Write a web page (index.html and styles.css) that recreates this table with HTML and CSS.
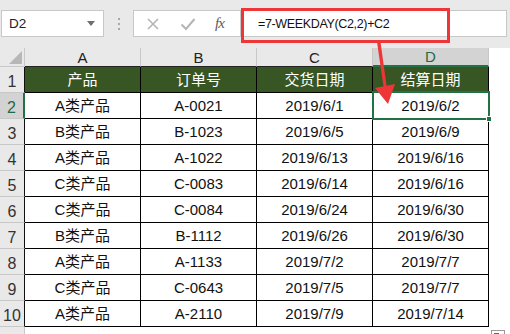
FILE: index.html
```html
<!DOCTYPE html>
<html>
<head>
<meta charset="utf-8">
<link rel="stylesheet" href="styles.css">
</head>
<body>
<div class="app">
  <div class="toolbar">
    <div class="namebox"><span class="cellref">D2</span><span class="dd"></span></div>
    <div class="grip"><i></i><i></i><i></i></div>
    <div class="fbtns">
      <svg class="ico" width="14" height="14" viewBox="0 0 14 14"><path d="M2 2 L12 12 M12 2 L2 12" stroke="#b5b5b5" stroke-width="1.6" fill="none"/></svg>
      <svg class="ico" width="16" height="14" viewBox="0 0 16 14"><path d="M1.5 7.5 L6 12 L14.5 2" stroke="#b5b5b5" stroke-width="2" fill="none"/></svg>
      <span class="fx">fx</span>
    </div>
    <div class="finput"><span class="formula">=7-WEEKDAY(C2,2)+C2</span></div>
  </div>
  <div class="sheet">
    <div class="corner"><span class="tri"></span></div>
    <div class="ch">A</div><div class="ch">B</div><div class="ch">C</div><div class="ch sel">D</div><div class="ch rest"></div>

    <div class="rh">1</div>
    <div class="c hd">产品</div><div class="c hd">订单号</div><div class="c hd">交货日期</div><div class="c hd">结算日期</div><div class="rest"></div>

    <div class="rh sel">2</div>
    <div class="c">A类产品</div><div class="c">A-0021</div><div class="c">2019/6/1</div><div class="c">2019/6/2</div><div class="rest"></div>

    <div class="rh">3</div>
    <div class="c">B类产品</div><div class="c">B-1023</div><div class="c">2019/6/5</div><div class="c">2019/6/9</div><div class="rest"></div>

    <div class="rh">4</div>
    <div class="c">A类产品</div><div class="c">A-1022</div><div class="c">2019/6/13</div><div class="c">2019/6/16</div><div class="rest"></div>

    <div class="rh">5</div>
    <div class="c">C类产品</div><div class="c">C-0083</div><div class="c">2019/6/14</div><div class="c">2019/6/16</div><div class="rest"></div>

    <div class="rh">6</div>
    <div class="c">C类产品</div><div class="c">C-0084</div><div class="c">2019/6/24</div><div class="c">2019/6/30</div><div class="rest"></div>

    <div class="rh">7</div>
    <div class="c">B类产品</div><div class="c">B-1112</div><div class="c">2019/6/26</div><div class="c">2019/6/30</div><div class="rest"></div>

    <div class="rh">8</div>
    <div class="c">A类产品</div><div class="c">A-1133</div><div class="c">2019/7/2</div><div class="c">2019/7/7</div><div class="rest"></div>

    <div class="rh">9</div>
    <div class="c">C类产品</div><div class="c">C-0643</div><div class="c">2019/7/5</div><div class="c">2019/7/7</div><div class="rest"></div>

    <div class="rh">10</div>
    <div class="c">A类产品</div><div class="c">A-2110</div><div class="c">2019/7/9</div><div class="c">2019/7/14</div><div class="rest"></div>

    <div class="rh last"></div>
  </div>

  <div class="selbox"><span class="handle"></span></div>
  <div class="redbox"></div>
  <svg class="arrow" width="510" height="334" viewBox="0 0 510 334">
    <polygon points="377,42 380.5,42 387,89 384,90" fill="#ee3537"/>
    <polygon points="375,88 395,84 388,104" fill="#ee3537"/>
  </svg>
  <div class="qa"><span></span></div>
</div>
</body>
</html>
```
FILE: styles.css
```css
* { box-sizing: border-box; }
html, body { margin: 0; padding: 0; }
body {
  width: 510px;
  height: 334px;
  overflow: hidden;
  background: #ffffff;
  font-family: "Liberation Sans", "Noto Sans CJK SC", sans-serif;
}
.app {
  position: relative;
  width: 510px;
  height: 334px;
  overflow: hidden;
}
.toolbar {
  height: 48px;
  background: #e9e9e9;
  display: flex;
  align-items: flex-start;
  padding-top: 10px;
  padding-left: 1px;
}
.namebox {
  width: 103px;
  height: 27px;
  background: #fff;
  border: 1px solid #c8c8c8;
  display: flex;
  align-items: center;
  justify-content: space-between;
  padding: 0 8px 0 7px;
}
.cellref { font-size: 13.5px; color: #222; }
.dd {
  width: 0; height: 0;
  border-left: 4px solid transparent;
  border-right: 4px solid transparent;
  border-top: 5px solid #6e6e6e;
}
.grip {
  width: 29px;
  height: 27px;
  display: flex;
  flex-direction: column;
  align-items: center;
  justify-content: center;
  gap: 3px;
}
.grip i { display: block; width: 2px; height: 2px; background: #a6a6a6; }
.fbtns {
  width: 108px;
  height: 27px;
  background: #fff;
  border: 1px solid #c8c8c8;
  display: flex;
  align-items: center;
  padding-left: 12px;
  gap: 0;
}
.fbtns .ico:nth-child(1) { margin-right: 20px; }
.fbtns .ico:nth-child(2) { margin-right: 19px; }
.fx {
  font-family: "Liberation Serif", serif;
  font-style: italic;
  font-size: 15px;
  color: #5a5a5a;
  letter-spacing: -1px;
}
.finput {
  width: 266px;
  height: 27px;
  background: #fff;
  border: 1px solid #c8c8c8;
  border-left: none;
  display: flex;
  align-items: center;
  padding-left: 17px;
}
.formula { font-size: 12.5px; color: #111; letter-spacing: -0.35px; }

.sheet {
  display: grid;
  grid-template-columns: 25px 116px 116px 116px 116px 1fr;
  grid-template-rows: 19px repeat(10, 26px) 1fr;
  height: 286px;
}
.corner {
  background: #e9e9e9;
  border-right: 1px solid #c8c8c8;
  border-bottom: 1px solid #c8c8c8;
  position: relative;
}
.tri {
  position: absolute;
  right: 2px;
  bottom: 2px;
  width: 13px;
  height: 13px;
  background: #b7b7b7;
  clip-path: polygon(100% 0, 100% 100%, 0 100%);
}
.ch {
  background: #e9e9e9;
  border-right: 1px solid #c8c8c8;
  border-bottom: 1px solid #222;
  display: flex;
  align-items: flex-end;
  justify-content: center;
  font-size: 15px;
  line-height: 17px;
  color: #222;
}
.ch.sel {
  background: #d3d3d3;
  color: #1f6b45;
  border-bottom: 2px solid #217346;
}
.ch.rest { background: #fff; border: none; }
.rh {
  background: #e9e9e9;
  border-right: 1px solid #111;
  border-bottom: 1px solid #c8c8c8;
  display: flex;
  align-items: flex-end;
  justify-content: center;
  font-size: 16px;
  line-height: 18px;
  padding-bottom: 1px;
  color: #333;
}
.rh.sel {
  background: #d3d3d3;
  color: #1f6b45;
  border-right: 2px solid #217346;
}
.rh.last { border-right: 1px solid #c8c8c8; border-bottom: none; }
.c {
  border-right: 1px solid #000;
  border-bottom: 1px solid #000;
  display: flex;
  align-items: flex-end;
  justify-content: center;
  padding-bottom: 3px;
  font-size: 15px;
  line-height: 18px;
  color: #111;
  white-space: nowrap;
}
.c.hd {
  background: #375623;
  color: #fff;
  font-weight: normal;
}
.rest { background: #fff; }

.selbox {
  position: absolute;
  left: 372px;
  top: 91px;
  width: 118px;
  height: 29px;
  border: 2px solid #217346;
}
.handle {
  position: absolute;
  right: -4px;
  bottom: -4px;
  width: 6px;
  height: 6px;
  background: #217346;
  border: 1px solid #fff;
}
.redbox {
  position: absolute;
  left: 241px;
  top: 8px;
  width: 209px;
  height: 35px;
  border: 3px solid #ee3537;
}
.arrow { position: absolute; left: 0; top: 0; }
.qa {
  position: absolute;
  left: 491px;
  top: 330px;
  width: 14px;
  height: 14px;
  background: #fff;
  border: 1px solid #9a9a9a;
}
.qa span {
  position: absolute;
  left: 2px;
  top: 2px;
  width: 5px;
  height: 6px;
  background: #2e6fd0;
}
```
